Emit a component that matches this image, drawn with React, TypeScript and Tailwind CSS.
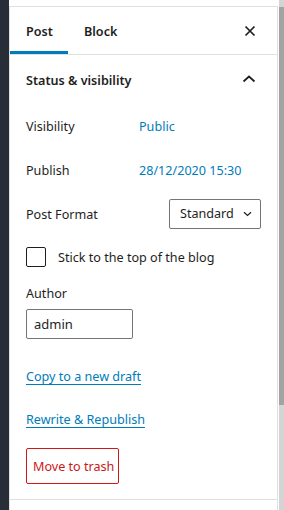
import React from "react";

export default function App() {
  const font = { fontFamily: '"Noto Sans", "Open Sans", sans-serif' };
  return (
    <div className="flex w-[284px] h-[510px] bg-white overflow-hidden text-[12.6px] text-[#1e1e1e]" style={font}>
      <div className="w-[9px] shrink-0 bg-[#272e38]" />
      <div className="w-[269px] shrink-0 mt-[6px] border-l border-t border-r border-[#e0e0e0] flex flex-col">
        <div className="h-[48px] flex items-stretch border-b border-[#e0e0e0]">
          <div className="w-[58px] flex items-center pl-[16px] font-semibold border-b-[3px] border-[#007cba] pt-[6px]">Post</div>
          <div className="flex items-center pl-[16px] font-semibold pt-[3px]">Block</div>
          <div className="flex-1" />
          <div className="w-[40px] flex items-center justify-center mr-[7px]">
            <svg width="12" height="12" viewBox="0 0 12 12" fill="none" stroke="#1e1e1e" strokeWidth="1.7">
              <path d="M1.5 1.5 L10.5 10.5 M10.5 1.5 L1.5 10.5" />
            </svg>
          </div>
        </div>
        <div className="flex flex-col px-[16px] pb-[15px] border-b border-[#e0e0e0]">
          <div className="h-[48px] flex items-center justify-between">
            <span className="font-semibold pt-[4px]">Status &amp; visibility</span>
            <svg width="14" height="10" viewBox="0 0 14 10" fill="none" stroke="#1e1e1e" strokeWidth="1.7" className="mr-[5px]">
              <path d="M1.5 7.5 L7 2.5 L12.5 7.5" />
            </svg>
          </div>
          <div className="h-[44px] flex items-center">
            <span className="w-[113px] pt-[4px]">Visibility</span>
            <span className="text-[#007cba] pt-[4px]">Public</span>
          </div>
          <div className="h-[44px] flex items-center">
            <span className="w-[113px] pt-[4px]">Publish</span>
            <span className="text-[#007cba] pt-[4px]">28/12/2020 15:30</span>
          </div>
          <div className="h-[44px] flex items-center justify-between">
            <span className="pt-[4px]">Post Format</span>
            <div className="w-[92px] h-[30px] mt-[1px] border border-[#757575] rounded-[2px] flex items-center justify-between pl-[10px] pr-[8px]">
              <span className="pt-[2px]">Standard</span>
              <svg width="9" height="6" viewBox="0 0 9 6" fill="none" stroke="#1e1e1e" strokeWidth="1.2">
                <path d="M1 1.2 L4.5 4.5 L8 1.2" />
              </svg>
            </div>
          </div>
          <div className="mt-[12px] h-[20px] flex items-center">
            <div className="w-[20px] h-[20px] border border-[#1e1e1e] rounded-[2px]" />
            <span className="ml-[12px] pt-[3px]">Stick to the top of the blog</span>
          </div>
          <div className="mt-[15px] h-[20px] flex items-center">
            <span className="pt-[4px]">Author</span>
          </div>
          <div className="mt-[7px] w-[107px] h-[30px] border border-[#757575] rounded-[2px] flex items-center pl-[7px] text-[13px]">
            <span className="pt-[2px]">admin</span>
          </div>
          <div className="mt-[26px] h-[20px] flex items-center">
            <span className="text-[#007cba] underline underline-offset-[3px] pt-[4px]">Copy to a new draft</span>
          </div>
          <div className="mt-[23px] h-[20px] flex items-center">
            <span className="text-[#007cba] underline underline-offset-[3px] pt-[4px]">Rewrite &amp; Republish</span>
          </div>
          <div className="mt-[20px] w-[93px] h-[36px] border border-[#cc1818] rounded-[2px] flex items-center pl-[6px] text-[#cc1818]">
            <span className="pt-[3px]">Move to trash</span>
          </div>
        </div>
      </div>
      <div className="w-[1px] shrink-0" />
      <div className="w-[5px] shrink-0 bg-[#d4d4d4] flex flex-col">
        <div className="mt-[7px] h-[398px] bg-[#a3a3a3]" />
      </div>
    </div>
  );
}
